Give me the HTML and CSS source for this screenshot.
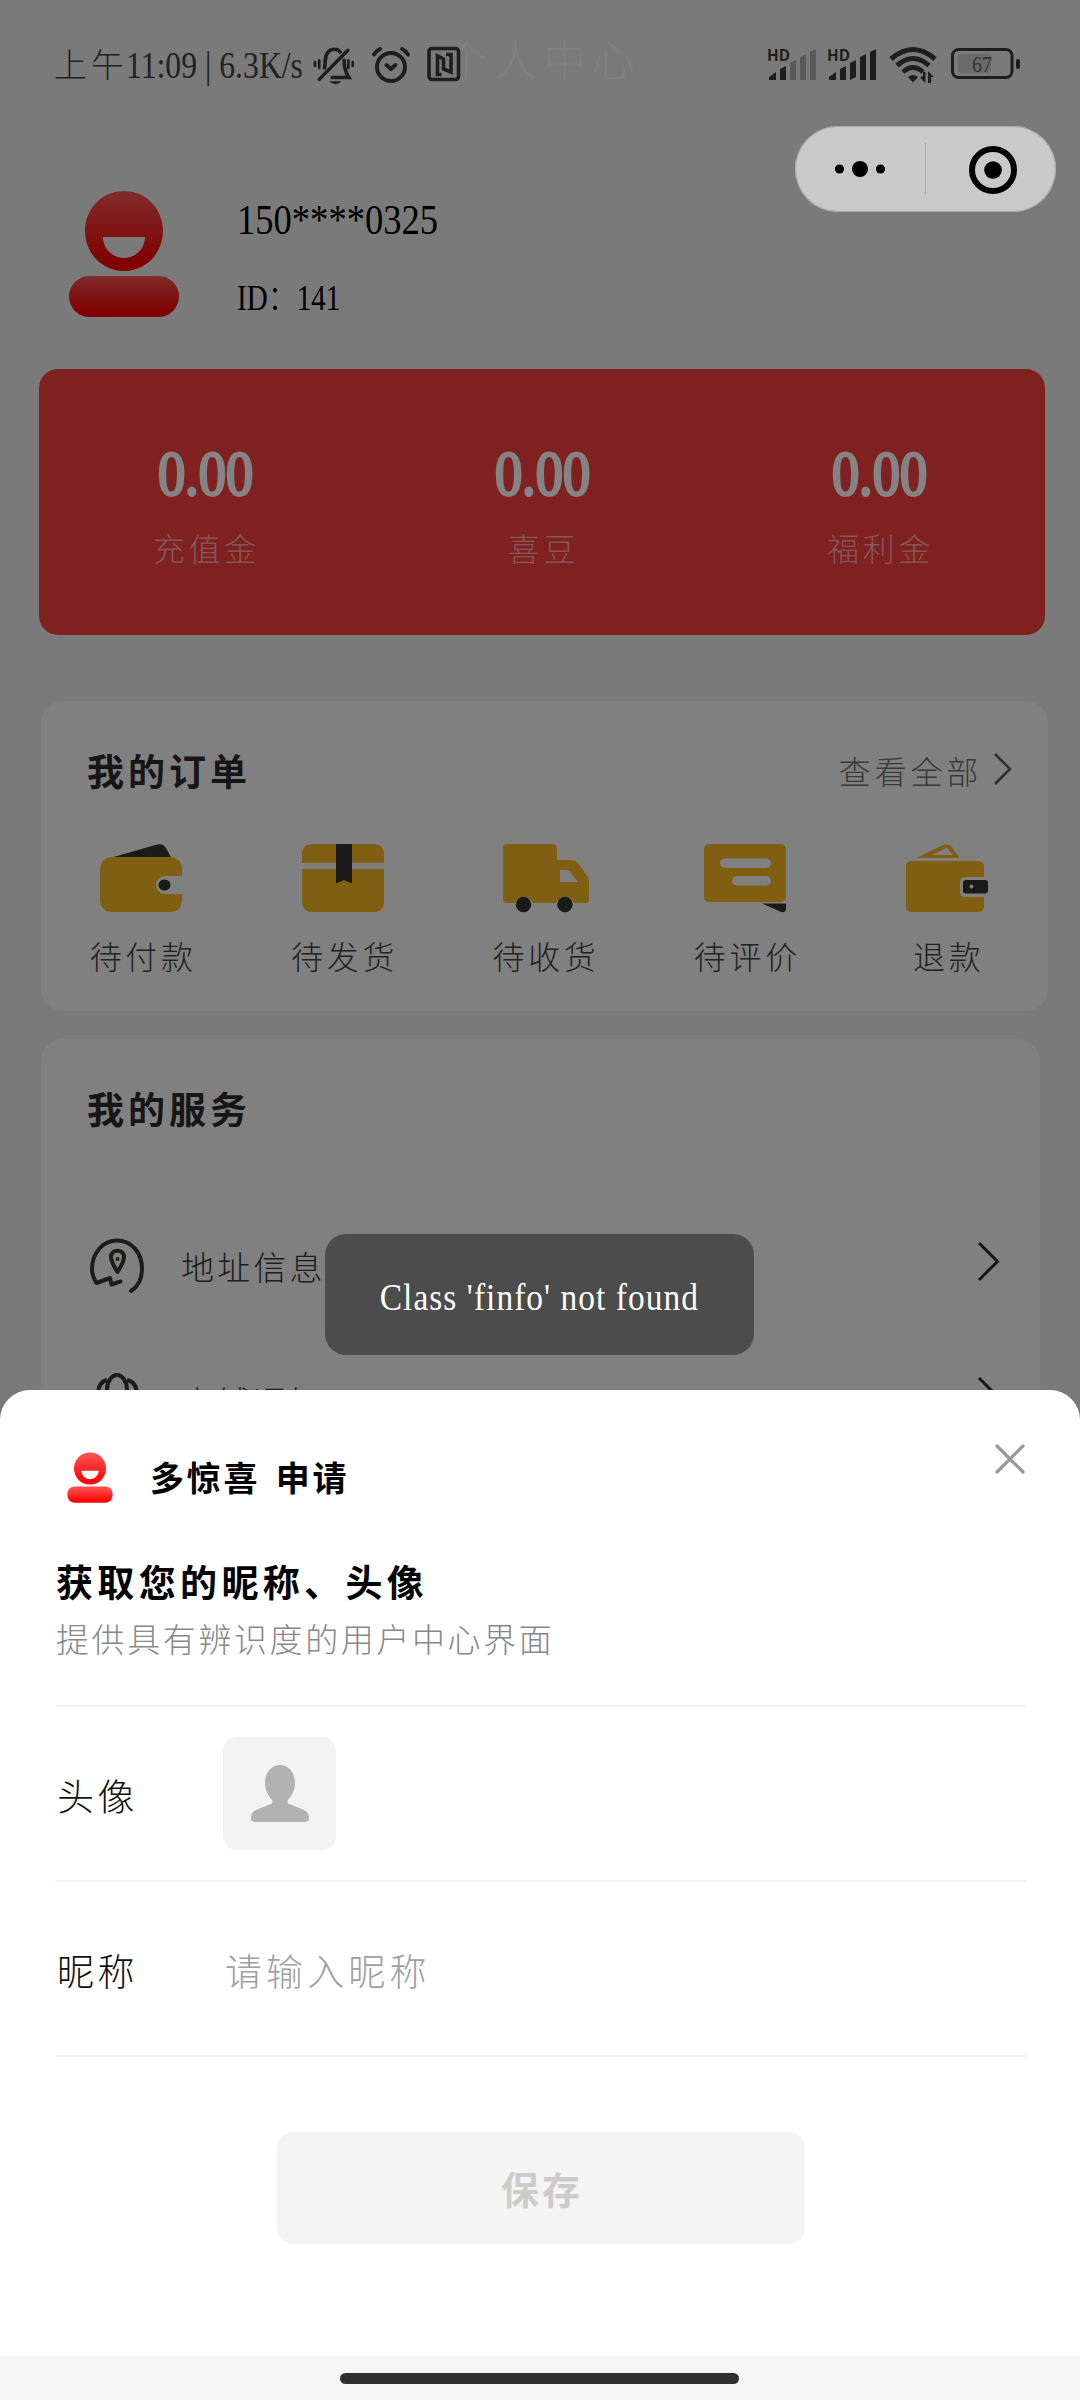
FILE: index.html
```html
<!DOCTYPE html>
<html lang="zh-CN">
<head>
<meta charset="utf-8">
<title>个人中心</title>
<link rel="stylesheet" href="styles.css">
</head>
<body>
<svg width="0" height="0" class="defs">
  <defs>
    <linearGradient id="dimRed" x1="0" y1="0" x2="0" y2="1"><stop offset="0" stop-color="#802b2b"/><stop offset=".9" stop-color="#800000"/></linearGradient>
    <linearGradient id="red" x1="0" y1="0" x2="0" y2="1"><stop offset="0" stop-color="#ff5656"/><stop offset=".9" stop-color="#ff0404"/></linearGradient>
  </defs>
</svg>
<div class="screen">
  <div class="page-title">个人中心</div>
  <header class="status">
    <div class="status-text"><span class="status-cn">上午</span><span class="status-latin">11:09 | 6.3K/s</span></div>
    <svg class="ic-bell" width="46" height="40" viewBox="0 0 46 40" fill="none" stroke="#1e1e1e" stroke-width="3.6" stroke-linecap="round">
      <path d="M12 22c.6-2 .6-5 .8-8 .4-8 5-11.500 9.200-11.500 3 0 5 1 6.500 2.700M32.500 14c0 8 1 12 5 18H20" stroke-width="3.800"/>
      <path d="M36.500 3.500 6.500 34"/><path d="M2 16v4M6.500 14v8M37 14v8M41.500 16v4" stroke-width="2.800"/>
      <path d="M17 36h13q-3 3-6.500 3T17 36z" fill="#1e1e1e" stroke="none"/>
    </svg>
    <svg class="ic-alarm" width="40" height="38" viewBox="0 0 40 38" fill="none" stroke="#1e1e1e" stroke-width="4" stroke-linecap="round" stroke-linejoin="round">
      <circle cx="20" cy="21" r="14"/><path d="M15.500 19l4.500 4 4.500-4M3 8.500Q5 5 9 3M37 8.500Q35 5 31 3"/>
    </svg>
    <svg class="ic-nfc" width="34" height="36" viewBox="0 0 34 36" fill="none" stroke="#1e1e1e" stroke-width="3.600">
      <rect x="2" y="2.500" width="29.500" height="31" rx="3"/><path d="M14.500 28.500h-4V10l6 3v10l7.500 3V8.500h-5"/>
    </svg>
    <svg class="ic-net" width="254" height="40" viewBox="0 0 254 40" fill="#1e1e1e">
      <text x="0" y="15.500" class="hd" textLength="23" lengthAdjust="spacingAndGlyphs">HD</text>
      <path d="M2 35v-3l7-5v8zM13 35V24l6-3v14z"/>
      <path d="M23 35V18l6-3v20zM33 35V12l6-3v26zM43 35V7l6-3v31z" fill="#595959"/>
      <text x="60" y="15.500" class="hd" textLength="23" lengthAdjust="spacingAndGlyphs">HD</text>
      <path d="M62 35v-3l7-5v8zM73 35V24l6-3v14zM83 35V18l6-3v17zM93 35V12l6-3v26zM103 35V7l6-3v31z"/>
      <g fill="none" stroke="#1e1e1e" stroke-width="5"><path d="M124 14q22-19 44 0M130 20.500q16-14 32 0M136 27q10-9 20 0"/></g>
      <path d="M141 32q5-4 10 0l-5 5.500zM156 31v-4h2.500v11L153 32.500zM161 38V26l6 6h-3v6z"/>
      <rect x="185.500" y="4.500" width="59.500" height="28" rx="6" fill="none" stroke="#1e1e1e" stroke-width="3"/>
      <rect x="191" y="9" width="33" height="19" rx="3" fill="#6b6b6b"/>
      <rect x="249" y="14" width="4" height="10" rx="2"/>
      <text x="205" y="27" class="batt" textLength="20" lengthAdjust="spacingAndGlyphs">67</text>
    </svg>
  </header>

  <div class="capsule">
    <svg width="261" height="86" viewBox="0 0 261 86"><circle cx="44.500" cy="43" r="4.600"/><circle cx="65" cy="43" r="8"/><circle cx="85.500" cy="43" r="4.600"/><path d="M130.500 17v51" stroke="#aaa"/><circle cx="198" cy="44" r="21" fill="none" stroke="#000" stroke-width="6"/><circle cx="198" cy="44" r="8.800"/></svg>
  </div>

  <section class="profile">
    <svg width="112" height="130" viewBox="0 0 112 130" fill="url(#dimRed)">
      <path fill-rule="evenodd" d="M55 0c23 0 39 19 39 40S78 80 55 80 16 61 16 40 32 0 55 0zM34.500 46q-1 0-.5 2.500C36 60 45 67 55 67s19-7 21-18.500q.5-2.500-.5-2.500z"/>
      <rect x="0" y="85" width="110" height="41" rx="20.500"/>
    </svg>
    <div class="who"><div class="phone"><span>150****0325</span></div><div class="uid"><span>ID：141</span></div></div>
  </section>

  <section class="wallet">
    <div><b>0.00</b><span>充值金</span></div>
    <div><b>0.00</b><span>喜豆</span></div>
    <div><b>0.00</b><span>福利金</span></div>
  </section>

  <section class="card orders">
    <div class="card-head"><h2>我的订单</h2><div class="more">查看全部<svg width="20" height="34" viewBox="0 0 20 34" fill="none" stroke="#303030" stroke-width="2.600"><path d="M1 2l15 15L1 32"/></svg></div></div>
    <div class="tabs">
      <div><svg width="83" height="69" viewBox="0 0 83 69"><path d="M12 13.500L57 .5q6-1.500 9 3.500l6 11H12z" fill="#1a1a1a"/><path d="M11 13h60q11 2 11 12v7H65a9 9 0 0 0 0 18h17v7q-1 11-11 11H11Q1 67 0 57V25Q1 14 11 13z" fill="#805e12"/><ellipse cx="64.500" cy="41" rx="6" ry="5.500" fill="#1a1a1a"/></svg><span>待付款</span></div>
      <div><svg width="83" height="69" viewBox="0 0 83 69"><path d="M9 0h64q8 1 9 9v10H0V9Q1 1 9 0zM0 25h82v35q-1 6-8 8H8q-7-2-8-8z" fill="#805e12"/><path d="M34 0h16v39.500L42 36l-8 3.500z" fill="#1a1a1a"/></svg><span>待发货</span></div>
      <div><svg width="83" height="69" viewBox="0 0 83 69"><path fill-rule="evenodd" d="M4 0h46q4 1 4 5v11h15q3 0 5 2l11 15q1 3 1 6v16q0 4-4 4h-11a10 10 0 0 0-18 0H30a10 10 0 0 0-18 0H4q-4 0-4-4V4q0-4 4-4zM57 26v12h18L67 28q-1-2-4-2z" fill="#805e12"/><circle cx="20.500" cy="60.500" r="7.700" fill="#1a1a1a"/><circle cx="62" cy="60.500" r="7.700" fill="#1a1a1a"/></svg><span>待收货</span></div>
      <div><svg width="83" height="69" viewBox="0 0 83 69"><rect width="82" height="58" rx="5" fill="#805e12"/><rect x="16" y="14.500" width="51" height="9.500" rx="4.700" fill="#808080"/><rect x="28" y="32" width="39" height="9.500" rx="4.700" fill="#808080"/><path d="M58 59.500h24v6q-1 4-6 2z" fill="#1a1a1a"/></svg><span>待评价</span></div>
      <div><svg width="83" height="69" viewBox="0 0 83 69"><path fill-rule="evenodd" d="M10 14L37 1q5-2 9 2l8 11zM26 11h21l-5-6q-1-2-4 0z" fill="#805e12"/><path d="M5 17h68q5 1 5 5v11H60q-6 0-6 5v10q0 5 6 5h18v10q0 4-5 5H5q-5-1-5-5V22q0-4 5-5z" fill="#805e12"/><rect x="57" y="36" width="25" height="13.500" rx="3" fill="#1a1a1a"/><circle cx="65.500" cy="42.500" r="2" fill="#808080"/></svg><span>退款</span></div>
    </div>
  </section>

  <section class="card services">
    <h2>我的服务</h2>
    <div class="service">
      <svg width="56" height="58" viewBox="0 0 56 58" fill="none" stroke="#1c1c1a" stroke-width="4" stroke-linecap="round" stroke-linejoin="round"><path d="M41 53C49 48 52 40 52 31 52 14 41 2.500 27 2.500S2 15 2 31c0 6 2 10 4.500 14L20 40l1.500 6.500 9-3"/><path d="M27.500 34C23 27 21 23 21 19c0-8.500 13-8.500 13 0 0 4-2 8-6.500 15z"/><circle cx="27.500" cy="21" r="1.200" stroke-width="1.500"/></svg>
      <span>地址信息</span>
      <svg class="chev" width="24" height="42" viewBox="0 0 24 42" fill="none" stroke="#161616" stroke-width="3"><path d="M1 2l18.500 18.500L1 39"/></svg>
    </div>
    <div class="service">
      <svg width="56" height="58" viewBox="0 0 56 58" fill="none" stroke="#1c1c1a" stroke-width="4"><ellipse cx="27" cy="17" rx="10" ry="15"/><path d="M17 7Q8 9 8 22M37 7q10 2 10 15"/></svg>
      <span>商铺通知</span>
      <svg class="chev" width="24" height="42" viewBox="0 0 24 42" fill="none" stroke="#161616" stroke-width="3"><path d="M1 2l18.500 18.500L1 39"/></svg>
    </div>
  </section>

  <div class="toast"><span>Class 'finfo' not found</span></div>

  <div class="sheet">
    <div class="sheet-head">
      <svg width="46" height="52" viewBox="0 0 112 130" preserveAspectRatio="none" fill="url(#red)">
        <path fill-rule="evenodd" d="M56 1c23 0 39 19 39 40S79 81 56 81 17 62 17 41 33 1 56 1zM35.500 47q-1 0-.5 2.500C37 61 46 68 56 68s19-7 21-18.500q.5-2.500-.5-2.500z"/>
        <rect x="1" y="86" width="110" height="41" rx="18"/>
      </svg>
      <span class="app">多惊喜 申请</span>
      <svg class="close" width="32" height="32" viewBox="0 0 32 32" stroke="#999" stroke-width="3.300" stroke-linecap="round"><path d="M3 3l26 26M29 3L3 29"/></svg>
    </div>
    <h1>获取您的昵称、头像</h1>
    <p class="desc">提供具有辨识度的用户中心界面</p>
    <div class="field"><label>头像</label><div class="avatar"><svg width="58" height="58" viewBox="0 0 58 58" fill="#b2b2b2"><path d="M29 0c9 0 15 8 15 18 0 8-4 13-7 17-1 2 0 4 1 4l13 5c5 2 7 5 7 9 0 3-2 4-4 4H4c-2 0-4-1-4-4 0-4 2-7 7-9l13-5c1 0 2-2 1-4-3-4-7-9-7-17C14 8 20 0 29 0z"/></svg></div></div>
    <div class="field"><label>昵称</label><span class="hint">请输入昵称</span></div>
    <div class="save">保存</div>
    <div class="nav"><i></i></div>
  </div>
</div>
</body>
</html>
```
FILE: styles.css
```css
* { box-sizing: border-box; }
body { margin: 0; font-family: "Liberation Serif", "Noto Sans CJK SC", serif; }
h1, h2, p { margin: 0; }
svg { display: block; flex: none; overflow: visible; }
.defs { position: absolute; }
.screen { position: relative; width: 1080px; height: 2400px; overflow: hidden; background: #7a7a7a; white-space: nowrap; }
.page-title { position: absolute; left: 445px; top: 26px; font-size: 43px; line-height: 72px; letter-spacing: 6px; color: #7f7f7f; font-weight: 300; }

.status { position: relative; display: flex; align-items: flex-start; height: 126px; padding: 45px 0 0 54px; color: #222; }
.status-text { display: flex; width: 259px; height: 40px; line-height: 42px; font-weight: 300; }
.status-cn { width: 72px; flex: none; font-size: 33px; letter-spacing: 4px; }
.status-latin { font-size: 37px; line-height: 42px; transform: scaleX(.857); transform-origin: left; }
.ic-bell { margin-top: 1px; width: 44px; }
.ic-alarm { margin: 1px 0 0 14px; }
.ic-nfc { margin: 1px 0 0 16px; }
.ic-net { margin: 0 0 0 306px; }
.hd { font: bold 16px "Open Sans", sans-serif; }
.batt { font-size: 23px; fill: #333; }

.capsule { position: absolute; left: 795px; top: 126px; width: 261px; height: 86px; border-radius: 43px; background: #c9c9c9; box-shadow: inset 0 0 0 1px #a8a8a8; }

.profile { display: flex; height: 243px; padding: 65px 0 0 69px; }
.who { margin-left: 56px; color: #000; }
.phone { height: 60px; line-height: 58px; font-size: 43px; }
.phone span { display: inline-block; transform: scaleX(.85); transform-origin: left; }
.uid { height: 60px; margin-top: 18px; line-height: 60px; font-size: 35px; font-weight: 300; }
.uid span { display: inline-block; transform: scaleX(.83); transform-origin: left; }

.wallet { display: grid; grid-template-columns: repeat(3, 337px); justify-content: center; margin: 0 35px 0 39px; height: 266px; border-radius: 19px; background: #802121; text-align: center; }
.wallet b { display: block; margin-top: 67px; height: 76px; line-height: 76px; font-size: 64px; font-weight: 400; -webkit-text-stroke: 3px #848484; color: #848484; transform: scaleX(.85); }
.wallet span { display: block; margin-top: 16px; padding-left: 3px; font-size: 32px; line-height: 44px; letter-spacing: 3.700px; color: #85565a; font-weight: 300; }

.card { background: #808080; border-radius: 22px; margin-left: 41px; }
h2 { font-size: 37px; line-height: 50px; letter-spacing: 4px; color: #161616; }
.orders { margin-top: 66px; width: 1007px; height: 310px; padding-top: 48px; }
.card-head { display: flex; justify-content: space-between; padding: 0 34px 0 46px; height: 50px; }
.more { display: flex; font-size: 32px; line-height: 48px; letter-spacing: 3.800px; color: #3a3a3a; font-weight: 300; }
.more svg { margin: 3px 0 0 12px; }
.tabs { display: grid; grid-template-columns: repeat(5, 1fr); margin-top: 45px; text-align: center; }
.tabs svg { margin: 0 auto; }
.tabs span { display: block; margin-top: 23px; padding-left: 3px; font-size: 32px; line-height: 44px; letter-spacing: 3.700px; color: #222; font-weight: 300; }
.services { margin-top: 28px; width: 999px; height: 500px; padding: 48px 38px 0 46px; }
.service { display: flex; align-items: flex-start; height: 135px; padding-left: 3px; }
h2 + .service { margin-top: 101px; }
.service span { margin: 9px 0 0 35px; font-size: 33px; line-height: 44px; letter-spacing: 3.200px; color: #1c1c1c; font-weight: 300; }
.service .chev { margin: 3px 0 0 auto; }

.toast { position: absolute; left: 325px; top: 1234px; width: 429px; height: 121px; border-radius: 21px; background: #4c4c4c; color: #fff; display: flex; justify-content: center; line-height: 127px; font-size: 38px; letter-spacing: 1.180px; }
.toast span { transform: scaleX(.88); }

.sheet { position: absolute; left: 0; top: 1390px; width: 1080px; height: 1010px; background: #fff; border-radius: 30px 30px 0 0; color: #000; padding-top: 62px; display: flex; flex-direction: column; }
.sheet-head { display: flex; padding: 0 54px 0 67px; height: 90px; }
.app { margin: 3px 0 0 37px; font-size: 34px; line-height: 50px; letter-spacing: 2.800px; font-weight: 700; word-spacing: 4px; }
.close { margin: -9px 0 0 auto; }
h1 { margin: 18px 0 0 56px; font-size: 37px; line-height: 50px; letter-spacing: 4.350px; }
.desc { margin: 9px 0 0 56px; font-size: 33px; line-height: 44px; letter-spacing: 2.600px; color: #888; font-weight: 300; }
.desc + .field { margin-top: 42px; }
.field { margin: 0 54px 0 55px; height: 175px; border-top: 2px solid #f3f3f3; display: flex; align-items: center; }
.field + .field { height: 177px; border-bottom: 2px solid #f3f3f3; }
label { width: 168px; padding: 3px 0 0 2px; font-size: 37px; letter-spacing: 3.500px; color: #111; font-weight: 300; }
.avatar { width: 113px; height: 113px; border-radius: 14px; background: #f3f3f3; display: flex; align-items: center; justify-content: center; }
.hint { font-size: 37px; letter-spacing: 4.100px; color: #a0a0a0; font-weight: 300; padding: 3px 0 0 2px; }
.save { margin: 75px 0 0 277px; width: 528px; height: 112px; border-radius: 16px; background: #f4f4f4; color: #ccc; font-size: 38px; line-height: 118px; letter-spacing: 3px; text-indent: 2px; text-align: center; font-weight: 700; }
.nav { margin-top: auto; height: 44px; background: #f6f6f6; padding-top: 17px; }
.nav i { display: block; width: 399px; height: 11px; border-radius: 5.500px; background: #303030; margin: 0 0 0 340px; }
```
